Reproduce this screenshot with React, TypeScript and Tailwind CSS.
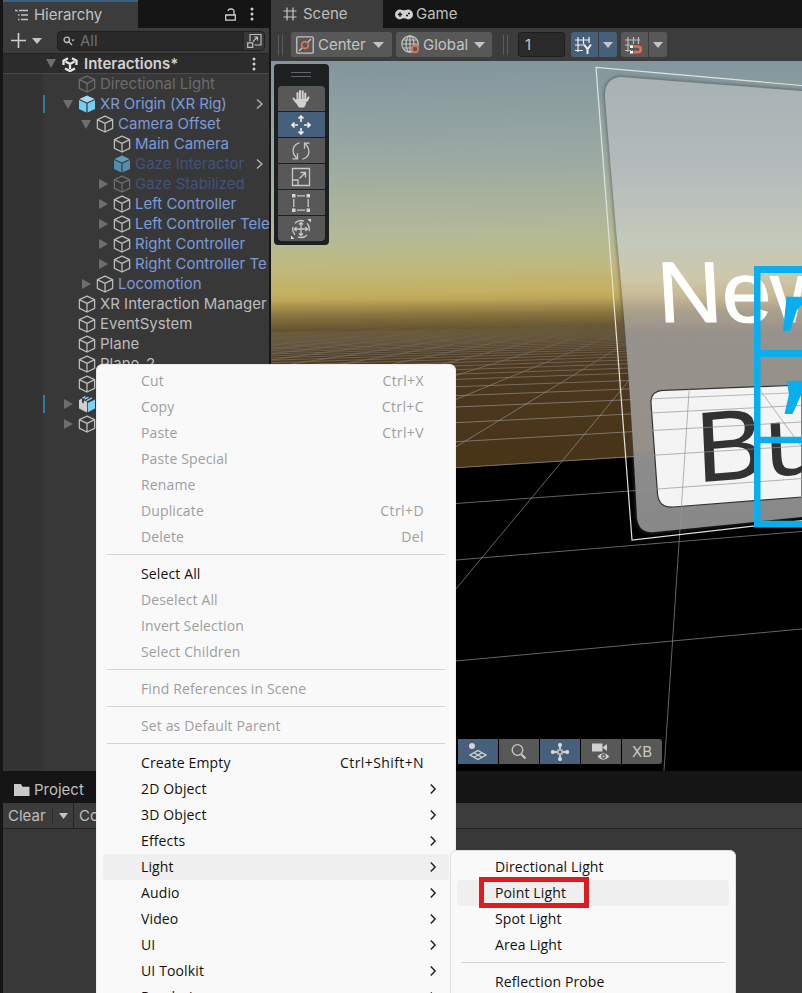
import type { ReactNode } from "react";

type MenuEntry =
  | "sep"
  | { label: string; shortcut?: string; disabled?: boolean; sub?: boolean; active?: boolean };

const CONTEXT_MENU: MenuEntry[] = [
  { label: "Cut", shortcut: "Ctrl+X", disabled: true },
  { label: "Copy", shortcut: "Ctrl+C", disabled: true },
  { label: "Paste", shortcut: "Ctrl+V", disabled: true },
  { label: "Paste Special", disabled: true },
  { label: "Rename", disabled: true },
  { label: "Duplicate", shortcut: "Ctrl+D", disabled: true },
  { label: "Delete", shortcut: "Del", disabled: true },
  "sep",
  { label: "Select All" },
  { label: "Deselect All", disabled: true },
  { label: "Invert Selection", disabled: true },
  { label: "Select Children", disabled: true },
  "sep",
  { label: "Find References in Scene", disabled: true },
  "sep",
  { label: "Set as Default Parent", disabled: true },
  "sep",
  { label: "Create Empty", shortcut: "Ctrl+Shift+N" },
  { label: "2D Object", sub: true },
  { label: "3D Object", sub: true },
  { label: "Effects", sub: true },
  { label: "Light", sub: true, active: true },
  { label: "Audio", sub: true },
  { label: "Video", sub: true },
  { label: "UI", sub: true },
  { label: "UI Toolkit", sub: true },
  { label: "Rendering", sub: true },
];

const LIGHT_MENU: MenuEntry[] = [
  { label: "Directional Light" },
  { label: "Point Light", active: true },
  { label: "Spot Light" },
  { label: "Area Light" },
  "sep",
  { label: "Reflection Probe" },
];

function MenuList({ items }: { items: MenuEntry[] }) {
  return (
    <>
      {items.map((item, i) =>
        item === "sep" ? (
          <div key={i} className="flex h-[11px] px-1 pt-1">
            <div className="h-px w-full bg-[#d2d2d2]" />
          </div>
        ) : (
          <div
            key={i}
            className={
              "flex h-[26px] items-center justify-between rounded-[4px] pl-[38px] " +
              (item.sub ? "pr-[11px] " : "pr-[25px] ") +
              (item.active ? "bg-[#efefef] " : "") +
              (item.disabled ? "text-[#9e9e9e]" : "text-[#111]")
            }
          >
            <span className="tracking-[0.13px]">{item.label}</span>
            {item.shortcut && <span className="tracking-[0.4px]">{item.shortcut}</span>}
            {item.sub && (
              <svg width="10" height="12" viewBox="0 0 10 12" fill="none" stroke="#222" strokeWidth="1.5">
                <path d="M2.800 1.500l4.300 4.500-4.300 4.500" />
              </svg>
            )}
          </div>
        ),
      )}
    </>
  );
}

function Cube({ kind }: { kind: "line" | "dim" | "blue" | "bluedim" | "variant" }) {
  if (kind === "line" || kind === "dim")
    return (
      <svg width="18" height="18" viewBox="0 0 18 18" fill="none" stroke={kind === "line" ? "#bcbcbc" : "#6c6c6c"} strokeWidth="1.3" strokeLinejoin="round">
        <path d="M9 1.2L16.6 4.7V13.3L9 17L1.4 13.3V4.7zM1.4 4.7L9 8.3L16.6 4.7M9 8.3V17" />
      </svg>
    );
  if (kind === "variant")
    return (
      <svg width="18" height="18" viewBox="0 0 18 18">
        <path d="M1 5l3-1.5 0 4 1.5 1 .5-3 3 1.300V17.500L1 13.500z" fill="#cfcfcf" />
        <path d="M9.800 8L17 4.500V13.500L9.800 17.300z" fill="#7fd0f5" />
        <path d="M4.500 3.200L7.500 1.700M6.500 4.200L10.500 2.100M8.500 5.800L14 2.900" stroke="#7fd0f5" strokeWidth="1.500" />
      </svg>
    );
  const top = kind === "blue" ? "#a5def8" : "#5c9db8";
  const side = kind === "blue" ? "#74cdf4" : "#4f8fab";
  return (
    <svg width="18" height="18" viewBox="0 0 18 18">
      <path d="M9 .6L16.600 4L9 7.500L1.400 4z" fill={top} />
      <path d="M1 5.100L8.400 8.500V17.500L1 14z" fill={side} />
      <path d="M17 5.100L9.600 8.500V17.500L17 14z" fill={side} />
    </svg>
  );
}

type Row = {
  label: string;
  pad: string;
  arrow?: "down" | "right";
  cube: "line" | "dim" | "blue" | "bluedim" | "variant";
  color: string;
  chevron?: boolean;
  marker?: boolean;
};

const ROWS: Row[] = [
  { label: "Directional Light", pad: "pl-[18px]", cube: "dim", color: "text-[#6b6b6b]" },
  { label: "XR Origin (XR Rig)", pad: "pl-[18px]", arrow: "down", cube: "blue", color: "text-[#7b9bd9] tracking-[-0.1px]", chevron: true, marker: true },
  { label: "Camera Offset", pad: "pl-[36px]", arrow: "down", cube: "line", color: "text-[#7b9bd9]" },
  { label: "Main Camera", pad: "pl-[53px]", cube: "line", color: "text-[#7b9bd9]" },
  { label: "Gaze Interactor", pad: "pl-[53px]", cube: "bluedim", color: "text-[#43527a]", chevron: true },
  { label: "Gaze Stabilized", pad: "pl-[53px]", arrow: "right", cube: "dim", color: "text-[#43527a]" },
  { label: "Left Controller", pad: "pl-[53px]", arrow: "right", cube: "line", color: "text-[#7b9bd9]" },
  { label: "Left Controller Tele", pad: "pl-[53px]", arrow: "right", cube: "line", color: "text-[#7b9bd9] tracking-[-0.02px]" },
  { label: "Right Controller", pad: "pl-[53px]", arrow: "right", cube: "line", color: "text-[#7b9bd9]" },
  { label: "Right Controller Te", pad: "pl-[53px]", arrow: "right", cube: "line", color: "text-[#7b9bd9]" },
  { label: "Locomotion", pad: "pl-[36px]", arrow: "right", cube: "line", color: "text-[#7b9bd9]" },
  { label: "XR Interaction Manager", pad: "pl-[18px]", cube: "line", color: "text-[#bcbcbc]" },
  { label: "EventSystem", pad: "pl-[18px]", cube: "line", color: "text-[#bcbcbc]" },
  { label: "Plane", pad: "pl-[18px]", cube: "line", color: "text-[#bcbcbc]" },
  { label: "Plane_2", pad: "pl-[18px]", cube: "line", color: "text-[#bcbcbc]" },
  { label: "", pad: "pl-[18px]", cube: "line", color: "text-[#bcbcbc]" },
  { label: "", pad: "pl-[18px]", arrow: "right", cube: "variant", color: "text-[#7b9bd9]", marker: true },
  { label: "", pad: "pl-[18px]", arrow: "right", cube: "line", color: "text-[#bcbcbc]" },
];

function Caret({ w = 11, h = 6, color = "#c4c4c4" }: { w?: number; h?: number; color?: string }) {
  return (
    <svg width={w} height={h} viewBox="0 0 10 6" preserveAspectRatio="none" className="shrink-0">
      <path d="M0 0h10L5 6z" fill={color} />
    </svg>
  );
}

function Dots() {
  return (
    <svg width="4" height="14" viewBox="0 0 4 14" fill="#cfcfcf">
      <circle cx="2" cy="2" r="1.500" />
      <circle cx="2" cy="7" r="1.500" />
      <circle cx="2" cy="12" r="1.500" />
    </svg>
  );
}

function Hierarchy() {
  return (
    <section className="flex w-[266px] shrink-0 flex-col bg-[#383838]">
      <div className="flex h-7 bg-[#151515]">
        <div className="flex w-[135px] items-center gap-[5px] border-t-2 border-[#3a6084] bg-[#3c3c3c] pl-3 text-[#c0c0c0]">
          <svg width="14" height="12" viewBox="0 0 14 12" stroke="#c0c0c0" strokeWidth="1.300" fill="none">
            <path d="M0 1.500h2M4 1.500h9M3 6h1.500M6 6h7M3 10.500h1.500M6 10.500h7M2.500 1.500v1" />
          </svg>
          <span className="tracking-[-0.05px]">Hierarchy</span>
        </div>
        <div className="flex flex-1 items-center justify-end gap-[14px] pr-[15px]">
          <svg width="11" height="13" viewBox="0 0 11 13" fill="none" stroke="#cfcfcf" strokeWidth="1.300">
            <path d="M.7 7h9.600v5.200H.7zM9 7V3.500Q9 1 6.200 1H5Q3.200 1 3 3" />
          </svg>
          <Dots />
        </div>
      </div>
      <div className="flex h-[25px] items-center bg-[#3c3c3c] pl-2">
        <svg width="15" height="15" viewBox="0 0 15 15" className="shrink-0" stroke="#d0d0d0" strokeWidth="1.600">
          <path d="M7.500 0v15M0 7.500h15" />
        </svg>
        <span className="ml-1.5 flex"><Caret w={10} h={6} /></span>
        <div className="ml-[15px] flex h-5 w-[208px] shrink-0 items-center overflow-hidden rounded-[4px] border border-[#1f1f1f] bg-[#292929] pl-[5px]">
          <svg width="12" height="10" viewBox="0 0 12 10" fill="none" stroke="#c4c4c4" strokeWidth="1.300">
            <circle cx="3.800" cy="3.800" r="2.700" />
            <path d="M5.800 5.800L9 9" />
            <path d="M8.500 3.500h3L10 5.500z" fill="#c4c4c4" stroke="none" />
          </svg>
          <span className="ml-[5px] flex-1 text-[#6f6f6f]">All</span>
          <span className="flex h-full w-[21px] items-center justify-center border-l border-[#242424] bg-[#383838]">
            <svg width="15" height="15" viewBox="0 0 15 15" fill="none" stroke="#bdbdbd" strokeWidth="1.200">
              <path d="M3 8.500V1.500h11v10.500H7.500M.7 9.800h5v4.500h-5zM6 8.500l4.500-4.500M7 4h3.500v3.500" />
            </svg>
          </span>
        </div>
      </div>
      <div className="flex h-[21px] items-center border-y border-[#242424] border-b-[#4a4a4a] bg-[#2c2c2c] pl-[43px] pr-[13px]">
        <Caret w={10} h={9} color="#6e6e6e" />
        <svg width="16" height="16" viewBox="0 0 16 16" className="ml-[6px]" fill="none" stroke="#e6e6e6" strokeWidth="2.300">
          <path d="M1.500 9V4.800L6 2.300M14.500 9V4.800L10 2.300M3 12.500l5 2.600 5-2.600M3.500 5.500L8 8l4.500-2.500M8 8v5" />
        </svg>
        <span className="ml-[6px] flex-1 text-[15px] font-semibold text-[#d2d2d2]">Interactions*</span>
        <Dots />
      </div>
      <div className="flex flex-1 flex-col bg-[linear-gradient(90deg,#333333_40px,#383838_40px)]">
        {ROWS.map((r, i) => (
          <div key={i} className="flex h-5 items-center whitespace-nowrap">
            <span className={"h-[18px] w-[2px] shrink-0 ml-10 " + (r.marker ? "bg-[#3179a3]" : "")} />
            <div className={"flex min-w-0 flex-1 items-center " + r.pad}>
              <span className="flex w-[18px] shrink-0 items-center">
                {r.arrow === "down" && <Caret w={10} h={9} color="#6e6e6e" />}
                {r.arrow === "right" && (
                  <svg width="9" height="10" viewBox="0 0 9 10" className="ml-px"><path d="M0 0L9 5L0 10z" fill="#6e6e6e" /></svg>
                )}
              </span>
              <span className="-ml-[3px] flex shrink-0"><Cube kind={r.cube} /></span>
              <span className={"ml-1 flex-1 leading-5 " + r.color}>{r.label}</span>
              {r.chevron && (
                <svg width="7" height="12" viewBox="0 0 7 12" className="mr-[6px] shrink-0" fill="none" stroke="#b4b4b4" strokeWidth="1.500">
                  <path d="M1 1.500L6 6L1 10.500" />
                </svg>
              )}
            </div>
          </div>
        ))}
      </div>
    </section>
  );
}

/* Ground grid: rows recede towards the horizon, columns fan out of one vanishing point. */
const GRID_LEFT_Y = [661, 560, 503.5, 467.7, 441.7, 422.7, 407, 395.7, 386.700];
const GRID_SLOPE = [0.0925, 0.0825, 0.072, 0.063, 0.057, 0.05, 0.042, 0.039, 0.036];
for (let n = 12.4; n < 45; n += 1) {
  GRID_LEFT_Y.push(310 + 860 / n);
  GRID_SLOPE.push(0.036 - (n - 12) * 0.0006);
}
const FAN = [-2.32, -1.53, -0.73, 0.066, 0.83, 1.64, 2.43, 3.22, 4.01, 4.8, 5.6, 6.4, 7.2, 8, 8.8, 9.6, 11, 12.500];

function SceneView() {
  return (
    <svg width="531" height="710" viewBox="271 61 531 710" className="block" fontFamily="'Liberation Sans', Arial, sans-serif">
      <defs>
        <linearGradient id="sky" gradientUnits="userSpaceOnUse" x1="536" y1="61" x2="540" y2="467">
          <stop offset="0" stopColor="#83969e" />
          <stop offset=".22" stopColor="#98a8a2" />
          <stop offset=".42" stopColor="#b3b998" />
          <stop offset=".5" stopColor="#bfb980" />
          <stop offset=".57" stopColor="#c4af5e" />
          <stop offset=".585" stopColor="#bda557" />
          <stop offset=".62" stopColor="#8a7640" />
          <stop offset=".66" stopColor="#62512f" />
          <stop offset=".71" stopColor="#503d24" />
          <stop offset=".8" stopColor="#4a371d" />
          <stop offset="1" stopColor="#483518" />
        </linearGradient>
        <linearGradient id="panel" gradientUnits="userSpaceOnUse" x1="0" y1="80" x2="0" y2="532">
          <stop offset="0" stopColor="#a8b1b5" />
          <stop offset=".2" stopColor="#b4bbba" />
          <stop offset=".36" stopColor="#c4c9ba" />
          <stop offset=".44" stopColor="#ccc7a8" />
          <stop offset=".475" stopColor="#c9ba96" />
          <stop offset=".51" stopColor="#aaa08d" />
          <stop offset=".56" stopColor="#98928c" />
          <stop offset=".82" stopColor="#958f88" />
          <stop offset=".83" stopColor="#8c8c8c" />
          <stop offset="1" stopColor="#888888" />
        </linearGradient>
        <linearGradient id="fadeGrad" gradientUnits="userSpaceOnUse" x1="0" y1="322" x2="0" y2="400">
          <stop offset="0" stopColor="#000" />
          <stop offset=".35" stopColor="#888" />
          <stop offset="1" stopColor="#fff" />
        </linearGradient>
        <mask id="fade" maskUnits="userSpaceOnUse" x="271" y="61" width="531" height="710">
          <rect x="271" y="61" width="531" height="710" fill="url(#fadeGrad)" />
        </mask>
        <filter id="soft" x="-5%" y="-5%" width="110%" height="110%"><feGaussianBlur stdDeviation="1.500" /></filter>
        <path id="panelShape" d="M605 97Q604 79 620 77L802 91V517L655 532Q639 534 637 518Q629 360 617 240Q610 160 605 97z" />
      </defs>
      <rect x="271" y="61" width="531" height="710" fill="#000" />
      <path d="M271 61H802V447L456 468L271 479z" fill="url(#sky)" />
      <use href="#panelShape" fill="none" stroke="#3c4444" strokeOpacity=".5" strokeWidth="3" filter="url(#soft)" />
      <use href="#panelShape" fill="url(#panel)" />
      <path d="M651 403Q650 391 664 390.300L802 385V497L673 507Q659 508 657.500 494z" fill="#f4f4f4" stroke="#333" strokeWidth="1.200" />
      <g transform="matrix(1.035 0 .056 1 659 322)">
        <text x="0" y="0" fontSize="86" fill="#fff" stroke="#fff" strokeWidth="1">New</text>
      </g>
      <g transform="matrix(1.04 -.085 .045 1 697 482.500)">
        <text x="0" y="0" fontSize="100" fill="#323232">Bu</text>
      </g>
      <g mask="url(#fade)" stroke="#96938f" strokeWidth="1" strokeOpacity=".68">
        {GRID_LEFT_Y.map((y, i) => (
          <line key={i} x1="271" x2="802" y1={y + GRID_SLOPE[i] * 185} y2={y - GRID_SLOPE[i] * 346} />
        ))}
        {FAN.map((c, i) => (
          <line key={i} x1="695" y1="301" x2={695 - c * 480} y2="781" />
        ))}
      </g>
      <path d="M802 85.500L596 67.500L632 540L802 520.500" fill="none" stroke="#e2e2dc" strokeWidth="1.200" />
      <g fill="#08aeee">
        <path d="M754 266H802V273H760.500V350H802V357H760.500V436.700H802V443.300H760.500V520.700H802V527.500H754z" />
        <path d="M786.500 296.700H802V305L797 310L790 331H783z" />
        <path d="M786.500 380.700H802V393L792.500 414H784.500L789 394z" />
      </g>
    </svg>
  );
}

function ToolCell({ active, children }: { active?: boolean; children: ReactNode }) {
  return (
    <div className={"flex h-[25px] items-center justify-center pr-px " + (active ? "bg-[#46607c]" : "bg-[#585858]")}>
      <svg width="20" height="20" viewBox="0 0 20 20" fill="none" stroke={active ? "#f0f0f0" : "#c8c8c8"} strokeWidth="1.300">
        {children}
      </svg>
    </div>
  );
}

function ToolPalette() {
  return (
    <div className="absolute left-[274px] top-[64px] w-[55px] rounded-[4px] bg-[#1c2020] px-1 pb-1">
      <div className="flex h-[22px] flex-col items-center justify-center gap-[3px] pr-0.5 pb-0.5">
        <div className="h-px w-5 bg-[#626666]" />
        <div className="h-px w-5 bg-[#626666]" />
      </div>
      <div className="flex flex-col gap-px overflow-hidden rounded-[4px]">
        <ToolCell>
          <g stroke="#d2d2d2" strokeLinecap="round" strokeWidth="2">
            <path d="M6.500 11V4M9 10V2M11.700 10V2.300M14.300 11V4.500M5.500 13.500L2.500 9.500M16 11.500L17.500 8.500" />
            <path d="M6 10.500H15.500L14.500 15L13 18H8L5.500 13.500z" fill="#d2d2d2" strokeWidth="1" />
          </g>
        </ToolCell>
        <ToolCell active>
          <path d="M10 7V1.500M7.500 3.500L10 1L12.500 3.500M10 13V18.500M7.500 16.500L10 19L12.500 16.500M7 10H1.500M3.500 7.500L1 10L3.500 12.500M13 10H18.500M16.500 7.500L19 10L16.500 12.500" strokeWidth="1.600" />
        </ToolCell>
        <ToolCell>
          <path d="M8.500 1.800C2 3.500 -.5 10.500 5.500 17M1.500 17.800H6.500V12.300M11.500 18.200C18 16.500 20.500 9.500 14.500 3M18.500 2.200H13.500V7.700" />
        </ToolCell>
        <ToolCell>
          <path d="M1.500 1.500H18.500V18.500H1.500zM1.500 13H7V18.500M8.500 11.500L14 6M9.500 5.500H14.500V10.500" />
        </ToolCell>
        <ToolCell>
          <path d="M6 2.800H14M6 17.200H14M2.800 6V14M17.200 6V14" />
          <path d="M1 1h3.500v3.500H1zM15.500 1H19v3.500H15.500zM1 15.500h3.500V19H1zM15.500 15.500H19V19H15.500z" fill="#d4d4d4" stroke="none" />
        </ToolCell>
        <ToolCell>
          <path d="M10 4v12M4 10h12M8 5.500l2-2 2 2M8 14.500l2 2 2-2M5.500 8l-2 2 2 2M14.500 8l2 2-2 2" />
          <path d="M4 4.200A8.300 8.300 0 0 1 13 2.200M16 4.200A8.300 8.300 0 0 1 18 12M16 16A8.300 8.300 0 0 1 7 17.800M4 15.800A8.300 8.300 0 0 1 2 8" />
          <path d="M16.500 0H20V3.500zM0 16.500V20H3.500z" fill="#e0e0e0" stroke="none" />
        </ToolCell>
      </div>
    </div>
  );
}

function Grip() {
  return (
    <span className="flex gap-[3px]">
      <span className="h-5 w-px bg-[#5c5c5c]" />
      <span className="h-5 w-px bg-[#5c5c5c]" />
    </span>
  );
}

function ScenePane() {
  return (
    <section className="flex w-[531px] flex-col">
      <div className="flex h-7 bg-[#151515] text-[#bebebe]">
        <div className="flex w-[112px] items-center gap-[6px] bg-[#3c3c3c] pl-3">
          <svg width="14" height="14" viewBox="0 0 14 14" stroke="#c8c8c8" strokeWidth="1.200">
            <path d="M4 .5v13M10 .5v13M.5 4h13M.5 10h13" />
          </svg>
          <span>Scene</span>
        </div>
        <div className="flex items-center gap-[3px] pl-3">
          <svg width="18" height="11" viewBox="0 0 18 11">
            <path d="M5 .5Q9 2 13 .5A5 5 0 0 1 13 10.500Q9 8 5 10.500A5 5 0 0 1 5 .5z" fill="#d0d0d0" />
            <path d="M5 3.300v4.400M2.800 5.500h4.400M11 6.500h2M13 4.500h2" stroke="#151515" strokeWidth="1.500" />
          </svg>
          <span>Game</span>
        </div>
      </div>
      <div className="flex h-[33px] items-center bg-[#3c3c3c] pl-[7px] text-[#c4c4c4]">
        <Grip />
        <div className="ml-2 flex h-[25px] w-[101px] items-center rounded-[3px] bg-[#585858] pl-[5px]">
          <svg width="18" height="18" viewBox="0 0 18 18" fill="none" stroke="#c4c4c4" strokeWidth="1.300">
            <rect x=".8" y=".8" width="16.400" height="16.400" rx="1" />
            <path d="M3 15L6.500 11.500M11.500 6.500L15 3" />
            <circle cx="9" cy="9" r="3.400" stroke="#e8705a" strokeWidth="1.700" />
          </svg>
          <span className="ml-[4px] flex-1">Center</span>
          <span className="mr-2 flex"><Caret /></span>
        </div>
        <div className="ml-1 flex h-[25px] w-[96px] items-center rounded-[3px] bg-[#585858] pl-[5px]">
          <svg width="19" height="19" viewBox="0 0 19 19" fill="none" stroke="#c4c4c4" strokeWidth="1.200">
            <circle cx="9" cy="9" r="8.200" />
            <ellipse cx="9" cy="9" rx="4" ry="8.200" />
            <path d="M1 9h16M2.500 5h13M2.500 13h9M9 .8v16.400" />
            <circle cx="14" cy="14" r="3.200" fill="#585858" stroke="#e8705a" strokeWidth="1.900" />
          </svg>
          <span className="ml-[3px] flex-1">Global</span>
          <span className="mr-[7px] flex"><Caret /></span>
        </div>
        <span className="ml-[11px] flex"><Grip /></span>
        <div className="ml-[10px] flex h-[25px] w-[47px] items-center rounded-[3px] border border-[#1e1e1e] bg-[#2a2a2a] pl-[6px]">1</div>
        <div className="ml-[6px] flex h-[25px] gap-px overflow-hidden rounded-[3px]">
          <div className="flex w-[27px] items-center justify-center bg-[#46607c] pr-1">
            <svg width="18" height="18" viewBox="0 0 18 18" fill="none" stroke="#eeeeee" strokeWidth="1.200">
              <path d="M4 1v15M9.500 1v7M15 1v6M1 4h15M1 9h9M1 14.500h8" />
              <path d="M10 8.500l3.500 4.500L17 8.500M13.500 13v5" strokeWidth="2" />
            </svg>
          </div>
          <div className="flex w-[18px] items-center justify-center bg-[#46607c]"><Caret w={10} /></div>
        </div>
        <div className="ml-1 flex h-[25px] gap-px overflow-hidden rounded-[3px]">
          <div className="flex w-[27px] items-center justify-center bg-[#585858] pr-1">
            <svg width="18" height="18" viewBox="0 0 18 18" fill="none" stroke="#bdbdbd" strokeWidth="1.200">
              <path d="M4 1v15M9.500 1v7M14.500 1v7M1 4h15M1 9h5M1 14.500h5" />
              <path d="M10 10.500h4a2.800 2.800 0 0 1 0 5.600h-4" stroke="#f0694a" strokeWidth="2.600" />
              <path d="M6 9.200h3.200v2.800H6zM6 14.700h3.200v2.800H6z" fill="#fff" stroke="none" />
            </svg>
          </div>
          <div className="flex w-[18px] items-center justify-center bg-[#585858]"><Caret w={10} /></div>
        </div>
      </div>
      <SceneView />
    </section>
  );
}

function ViewOptions() {
  return (
    <div className="absolute left-[458px] top-[739px] flex h-[25px] gap-px text-[#c8c8c8]">
      <div className="flex w-10 items-center justify-center bg-[#46607c] pr-0.5">
        <svg width="20" height="20" viewBox="0 0 20 20" fill="none" stroke="#d4d4d4" strokeWidth="1.300">
          <circle cx="5" cy="4" r="3" fill="#d4d4d4" stroke="none" />
          <path d="M11 8.500L19 13L11 17.500L3 13zM7 10.800L15 15.200M15 10.800L7 15.200" />
        </svg>
      </div>
      <div className="flex w-10 items-center justify-center bg-[#585858]">
        <svg width="16" height="16" viewBox="0 0 16 16" fill="none" stroke="#c8c8c8" strokeWidth="1.300">
          <circle cx="6.500" cy="6" r="5.300" />
          <path d="M10.500 10.500L14.500 14.500" strokeWidth="2.200" />
        </svg>
      </div>
      <div className="flex w-10 items-center justify-center bg-[#46607c]">
        <svg width="18" height="18" viewBox="0 0 18 18" fill="#d4d4d4" stroke="#d4d4d4" strokeWidth="1.200">
          <path d="M9 3v3.500M9 11.500v4M2 9h4.500M11.500 9h4" strokeWidth="1.800" />
          <rect x="7" y="7" width="4" height="4" fill="none" />
          <circle cx="9" cy="2" r="1.500" /><circle cx="9" cy="16" r="1.500" /><circle cx="2" cy="9" r="1.500" /><circle cx="16" cy="9" r="1.500" />
        </svg>
      </div>
      <div className="flex w-10 items-center justify-center bg-[#585858] pr-0.5">
        <svg width="20" height="20" viewBox="0 0 20 20">
          <path d="M2 1.500h10.500v8H2zM12.500 5.500L17 2v7z" fill="#d0d0d0" />
          <path d="M7 14.500q6-7.500 13 0q-7 7.500-13 0z" fill="#d0d0d0" stroke="#585858" />
          <circle cx="13.500" cy="14.500" r="2.400" fill="#585858" /><circle cx="13.500" cy="14.500" r="1" fill="#d0d0d0" />
        </svg>
      </div>
      <div className="flex w-10 items-center justify-center rounded-r-[3px] bg-[#585858]">XB</div>
    </div>
  );
}

function ProjectPane() {
  return (
    <section className="flex flex-1 flex-col bg-[#383838] text-[#bebebe]">
      <div className="flex h-8 items-center gap-1 bg-[#151515] pl-[11px] pt-[5px]">
        <svg width="16" height="12" viewBox="0 0 16 12"><path d="M0 0H7L8.500 2.800H15.500V12H0z" fill="#c8c8c8" /></svg>
        <span>Project</span>
      </div>
      <div className="flex h-[26px] items-center border-b border-[#232323] bg-[#3c3c3c]">
        <span className="w-[49px] pl-[5px]">Clear</span>
        <span className="flex h-4 w-[21px] items-center justify-center border-l border-[#2a2a2a]"><Caret w={9} /></span>
        <span className="flex h-full items-center border-l border-[#232323] pl-[5px]">Collapse</span>
      </div>
    </section>
  );
}

export default function App() {
  return (
    <main className="relative flex h-[993px] w-[802px] flex-col overflow-hidden bg-[#151515] pl-[3px] font-['Inter',sans-serif] text-[15px] leading-[18px]">
      <div className="flex h-[771px] shrink-0 gap-[2px]">
        <Hierarchy />
        <ScenePane />
      </div>
      <ProjectPane />
      <ToolPalette />
      <ViewOptions />
      <div className="absolute left-[96px] top-[364px] h-[640px] w-[360px] rounded-[6px] border border-[#ececec] bg-[#f9f9f9] px-[6px] pt-[3px] font-['Open_Sans',sans-serif] text-[14px]">
        <MenuList items={CONTEXT_MENU} />
      </div>
      <div className="absolute left-[450px] top-[850px] h-[200px] w-[286px] rounded-[6px] border border-[#dedede] bg-[#f9f9f9] px-[6px] pt-[3px] font-['Open_Sans',sans-serif] text-[14px]">
        <MenuList items={LIGHT_MENU} />
      </div>
      <div className="absolute left-[479px] top-[877px] h-[31px] w-[110px] border-[5px] border-[#de1b20]" />
    </main>
  );
}
